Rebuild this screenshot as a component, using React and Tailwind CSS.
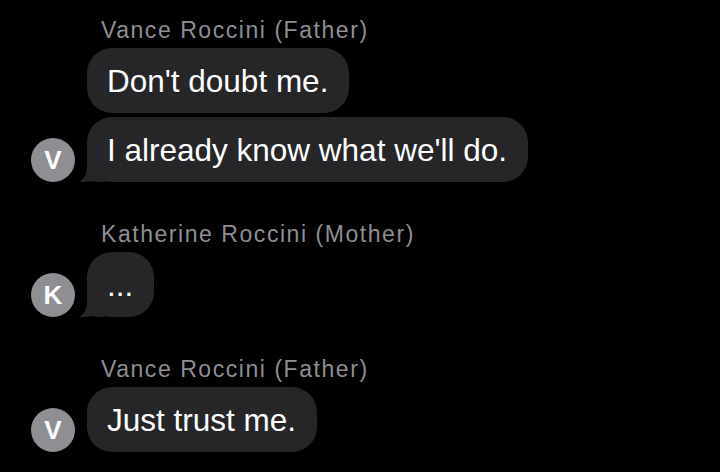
const FONT = { fontFamily: '"Liberation Sans", Arial, sans-serif' };

function Tail() {
  return (
    <svg
      className="absolute left-[-8px] bottom-0"
      width="26"
      height="24"
      viewBox="0 0 26 24"
    >
      <path
        d="M8 0 L8 9 C8 16 5.5 20.5 0 24 C5 24 9 23.6 12 23 C16 23.8 20 24 26 24 L26 0 Z"
        fill="#262629"
      />
    </svg>
  );
}

function Bubble({ text, tail }) {
  return (
    <div className="relative self-start">
      {tail && <Tail />}
      <div className="relative h-[65px] rounded-[25px] bg-[#262629] pl-5 pr-[21px] pt-[2px] flex items-center text-[31.5px] leading-none text-white">
        {text}
      </div>
    </div>
  );
}

function Avatar({ letter }) {
  return (
    <div className="w-[44px] h-[44px] shrink-0 rounded-full bg-[#8e8e93] flex items-center justify-center text-white text-[26px] font-bold leading-none">
      {letter}
    </div>
  );
}

function Group({ name, letter, messages, tail = true }) {
  return (
    <div className="flex items-end gap-3 pl-[31px]">
      <Avatar letter={letter} />
      <div className="flex flex-col">
        <div className="pl-[14px] mb-1 h-[28px] text-[23px] leading-[28px] tracking-[1.55px] text-[#8e8e93]">
          {name}
        </div>
        <div className="flex flex-col gap-1">
          {messages.map((m, i) => (
            <Bubble key={i} text={m} tail={tail && i === messages.length - 1} />
          ))}
        </div>
      </div>
    </div>
  );
}

export default function App() {
  return (
    <div className="w-full h-[472px] bg-black overflow-hidden pt-4 flex flex-col gap-[38px]" style={FONT}>
      <Group
        name="Vance Roccini (Father)"
        letter="V"
        messages={["Don't doubt me.", "I already know what we'll do."]}
      />
      <Group name="Katherine Roccini (Mother)" letter="K" messages={["..."]} />
      <Group name="Vance Roccini (Father)" letter="V" messages={["Just trust me."]} tail={false} />
    </div>
  );
}
